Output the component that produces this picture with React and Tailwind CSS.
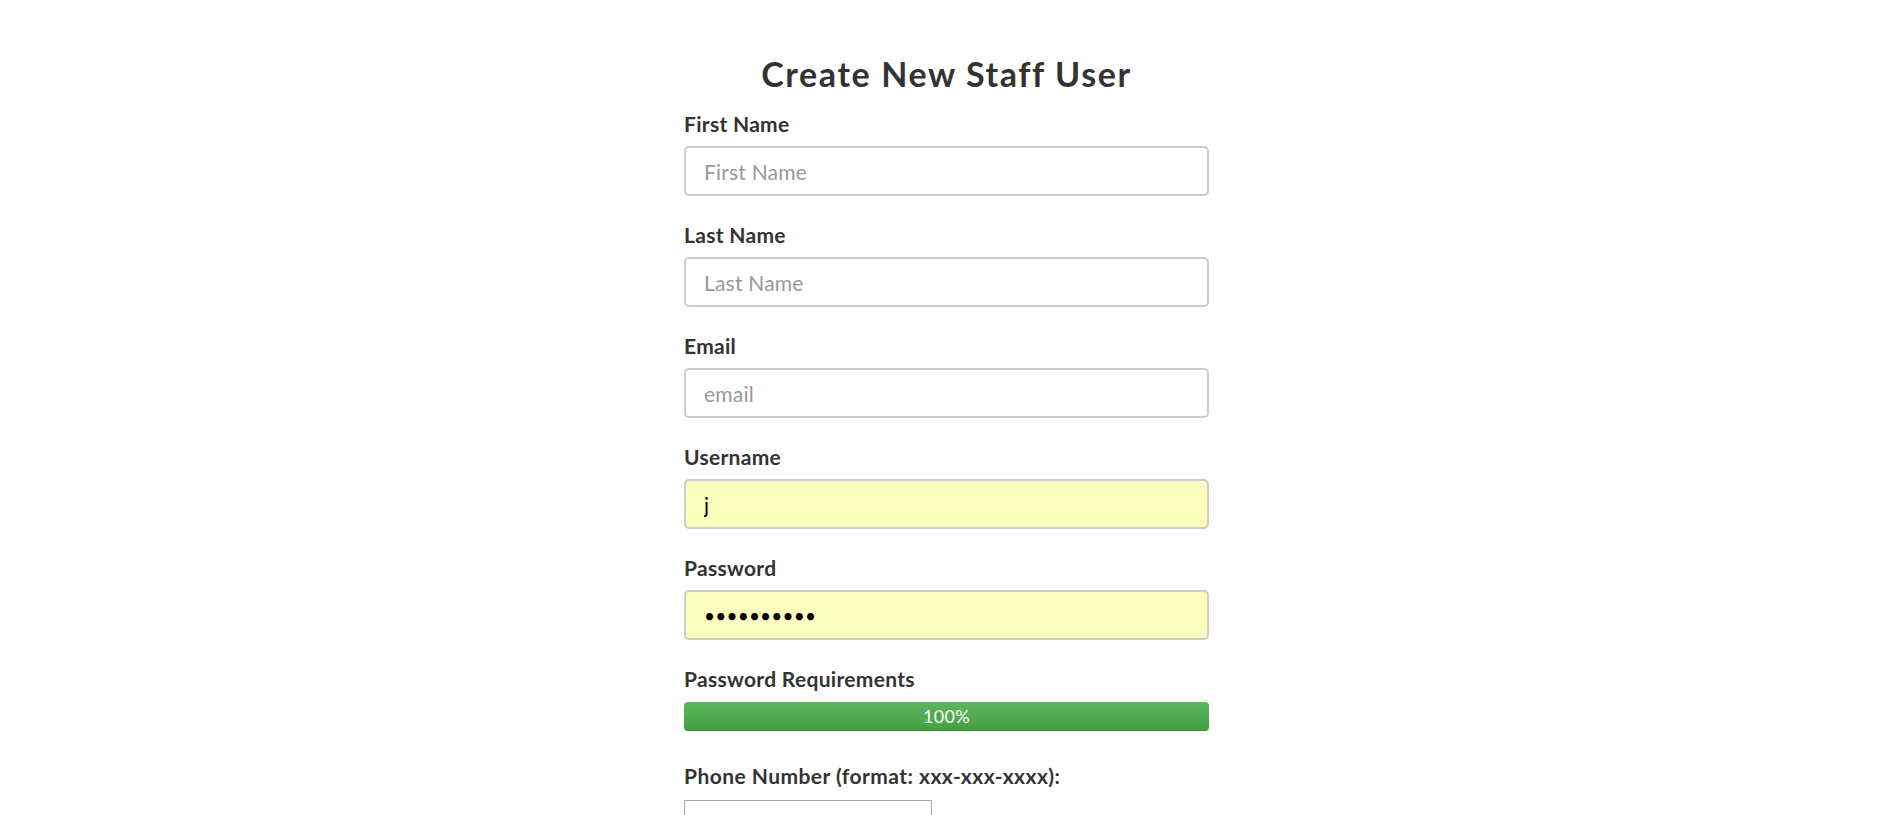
import React from "react";

const fields = [
  { label: "First Name", placeholder: "First Name" },
  { label: "Last Name", placeholder: "Last Name" },
  { label: "Email", placeholder: "email" },
  { label: "Username", value: "j", filled: true },
  { label: "Password", value: "jjjjjjjjjj", filled: true, type: "password" },
];

const Field = ({ label, placeholder, value, filled, type }) => (
  <div className="mb-[26px]">
    <label className="block mb-[10px] text-[21px] leading-[25px] font-bold tracking-[0.3px] text-[#333]">
      {label}
    </label>
    <input
      type={type || "text"}
      placeholder={placeholder}
      defaultValue={value}
      readOnly
      className={`block w-full h-[50px] px-[18px] rounded-[5px] border-2 border-[#ccc] outline-none tracking-[0.2px] placeholder:text-[#999] ${
        type === "password" ? "text-[19px]" : "text-[21px]"
      } ${filled ? "bg-[#faffbd] text-black" : "bg-white text-[#555]"}`}
    />
  </div>
);

export default function App() {
  return (
    <div
      className="min-h-screen bg-white text-[#333]"
      style={{ fontFamily: "Lato, 'Open Sans', sans-serif" }}
    >
      <div className="w-[525px] mx-auto pt-[54px]">
        <h2 className="text-center text-[34px] leading-[40px] font-bold tracking-[1.6px] mb-[17px]">
          Create New Staff User
        </h2>
        {fields.map((f) => (
          <Field key={f.label} {...f} />
        ))}
        <div className="mb-[32px]">
          <label className="block mb-[11px] text-[21px] leading-[25px] font-bold tracking-[0.3px]">
            Password Requirements
          </label>
          <div className="h-[29px] rounded-[4px] overflow-hidden bg-[#f5f5f5]">
            <div className="h-full w-full flex items-center justify-center text-white text-[18px] tracking-[0.3px] bg-gradient-to-b from-[#5cb85c] to-[#449d44] shadow-[inset_0_-1px_0_rgba(0,0,0,0.15)]">
              100%
            </div>
          </div>
        </div>
        <div>
          <label className="block mb-[12px] text-[21px] leading-[25px] font-bold tracking-[0.45px]">
            Phone Number (format: xxx-xxx-xxxx):
          </label>
          <input
            type="tel"
            className="block w-[248px] h-[30px] border border-[#a9a9a9] bg-white"
          />
        </div>
      </div>
    </div>
  );
}
